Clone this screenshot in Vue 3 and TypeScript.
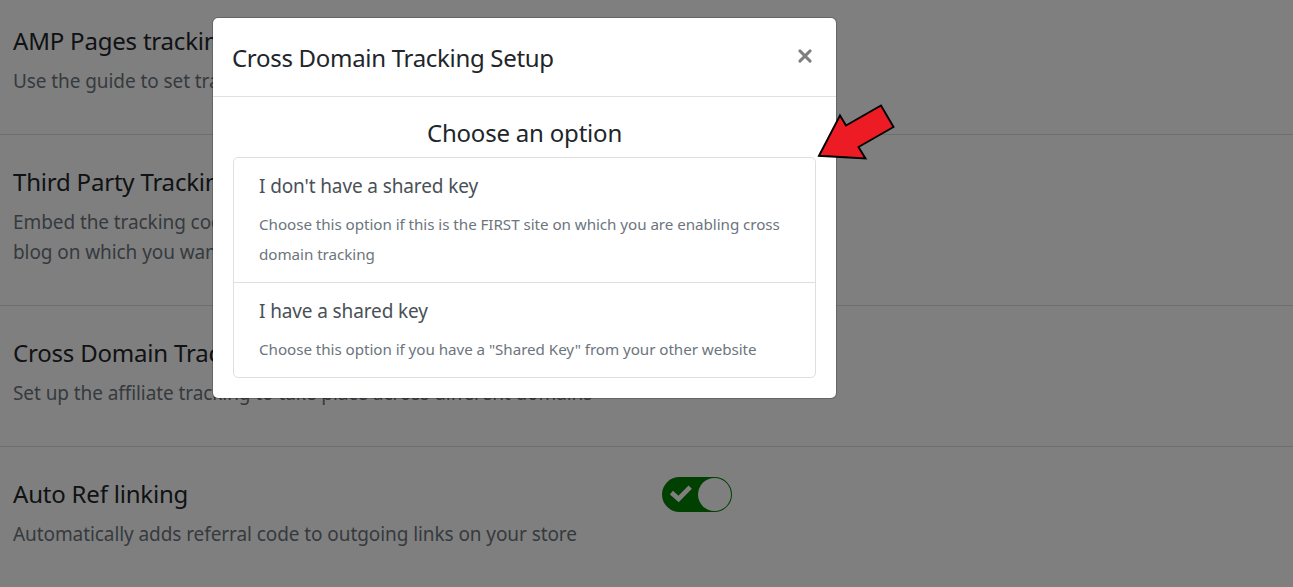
<script setup lang="ts">
interface Setting {
  title: string
  lines: string[]
  enabled?: boolean
}

interface Option {
  title: string
  lines: string[]
}

const settings: Setting[] = [
  { title: 'AMP Pages tracking', lines: ['Use the guide to set tracking'] },
  {
    title: 'Third Party Tracking',
    lines: ['Embed the tracking code', 'blog on which you want'],
  },
  {
    title: 'Cross Domain Tracking',
    lines: ['Set up the affiliate tracking to take place across different domains'],
  },
  {
    title: 'Auto Ref linking',
    lines: ['Automatically adds referral code to outgoing links on your store'],
    enabled: true,
  },
]

const options: Option[] = [
  {
    title: "I don't have a shared key",
    lines: ['Choose this option if this is the FIRST site on which you are enabling cross', 'domain tracking'],
  },
  {
    title: 'I have a shared key',
    lines: ['Choose this option if you have a "Shared Key" from your other website'],
  },
]
</script>

<template>
  <div class="page">
    <main class="settings">
      <section v-for="s in settings" :key="s.title" class="setting">
        <div class="copy">
          <h2>{{ s.title }}</h2>
          <p v-for="line in s.lines" :key="line">{{ line }}</p>
        </div>
        <div v-if="s.enabled" class="toggle">
          <svg class="check" viewBox="0 0 22 18" width="22" height="18">
            <path d="M1.4 7.6 8.6 14 20.2 2.2" fill="none" stroke="#fff" stroke-width="4.7" />
          </svg>
          <span class="knob"></span>
        </div>
      </section>
    </main>

    <div class="backdrop">
      <div class="dialog" role="dialog">
        <header>
          <h3>Cross Domain Tracking Setup</h3>
          <svg class="close" viewBox="0 0 14 14" width="14" height="14">
            <path d="M1.9 1.9 12.1 12.1M12.1 1.9 1.9 12.1" stroke="#7f7f7f" stroke-width="2.9" stroke-linecap="round" />
          </svg>
        </header>
        <div class="body">
          <h3 class="choose">Choose an option</h3>
          <ul>
            <li v-for="o in options" :key="o.title">
              <h4>{{ o.title }}</h4>
              <p v-for="line in o.lines" :key="line">{{ line }}</p>
            </li>
          </ul>
        </div>
      </div>
    </div>

    <svg class="arrow" viewBox="0 0 80 60" width="80" height="60">
      <path d="M4 55.8 25 15.5 31 25.5 66 5.5 78.5 27 43.5 47 50.5 58.5Z" fill="#ed1c24" stroke="#000" stroke-width="1.9" />
    </svg>
  </div>
</template>

<style>
body {
  margin: 0;
  overflow: hidden;
}
</style>

<style scoped>
* {
  box-sizing: border-box;
}
.page {
  position: relative;
  width: 100%;
  height: 587px;
  overflow: hidden;
  background: #fff;
  font-family: 'Segoe UI', 'Noto Sans', sans-serif;
  color: #212529;
}
h2,
h3,
h4,
p,
ul {
  margin: 0;
  padding: 0;
  font-weight: 400;
  white-space: nowrap;
}
.setting {
  display: flex;
  padding: 32px 13px 38px;
  border-bottom: 1px solid #dfdfdf;
}
.setting:first-child {
  padding-top: 26px;
}
.setting:last-child {
  border-bottom: 0;
}
.copy {
  width: 649px;
  flex: none;
}
h2,
h3 {
  font-size: 24px;
  line-height: 30px;
  letter-spacing: -0.2px;
}
h2 {
  margin-bottom: 10px;
}
header h3 {
  margin-left: -1px;
  letter-spacing: -0.3px;
}
.copy p {
  font-size: 19px;
  line-height: 30px;
  letter-spacing: -0.08px;
  color: #6c757d;
}
.toggle {
  display: flex;
  align-items: center;
  justify-content: space-between;
  width: 70px;
  height: 35px;
  margin-top: -2px;
  padding: 0 1px 0 8px;
  border-radius: 18px;
  background: #008000;
}
.check {
  margin-top: -1px;
}
.knob {
  width: 33px;
  height: 33px;
  border-radius: 50%;
  background: #fff;
}
.backdrop {
  position: absolute;
  inset: 0;
  padding: 17px 0 0 212px;
  background: rgba(0, 0, 0, 0.5);
}
.dialog {
  width: 625px;
  height: 382px;
  border: 1px solid rgba(0, 0, 0, 0.2);
  border-radius: 6px;
  background: #fff;
  background-clip: padding-box;
}
header {
  display: flex;
  justify-content: space-between;
  height: 79px;
  padding: 25px 24px 0 20px;
  border-bottom: 1px solid #dee2e6;
}
.close {
  margin-top: 6px;
}
.body {
  padding: 21px 20px 20px;
}
.choose {
  margin-bottom: 9px;
  text-align: center;
}
ul {
  list-style: none;
  border: 1px solid #dfdfdf;
  border-radius: 5px;
}
li {
  padding: 16px 25px 13px;
}
li + li {
  border-top: 1px solid #dfdfdf;
}
h4 {
  margin-bottom: 11px;
  font-size: 19px;
  line-height: 24px;
  letter-spacing: -0.12px;
  color: #495057;
}
li p {
  font-size: 15.2px;
  line-height: 30px;
  letter-spacing: -0.05px;
  color: #6c757d;
}
.arrow {
  position: absolute;
  left: 815px;
  top: 100px;
}
</style>
